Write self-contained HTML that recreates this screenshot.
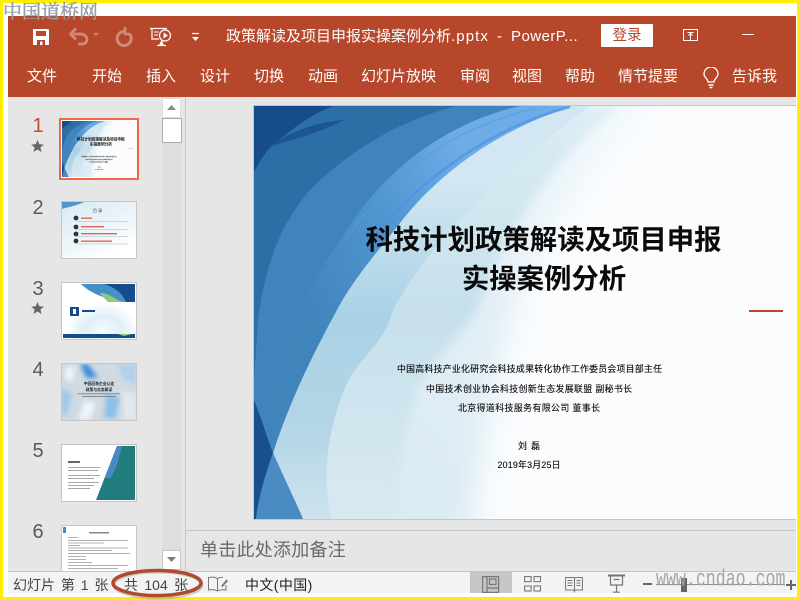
<!DOCTYPE html>
<html lang="zh"><head><meta charset="utf-8"><title>PowerPoint</title>
<style>
html,body{margin:0;padding:0;width:800px;height:600px;overflow:hidden;background:#fff}
body{position:relative;font-family:"Liberation Sans","Noto Sans CJK SC",sans-serif}
div,span,svg{position:absolute}
.m{top:67px;font-size:15px;line-height:20px;color:#fff;white-space:nowrap}
.n{left:25px;width:26px;text-align:center;font-size:20px;line-height:24px;color:#5a5a5a}
.t{left:61px;width:76px;height:58px;background:#fff;box-sizing:border-box;border:1px solid #c6c6c6;overflow:hidden}
.s{font-size:14px;line-height:20px;top:575px;color:#444;white-space:nowrap}
</style></head><body>
<svg width="0" height="0" style="left:0;top:0">
<defs>
<filter id="soft" x="-15%" y="-15%" width="130%" height="130%"><feGaussianBlur stdDeviation="14"/></filter>
<filter id="soft2" x="-10%" y="-10%" width="120%" height="120%"><feGaussianBlur stdDeviation="5"/></filter>
<clipPath id="cl"><rect x="254" y="106" width="551" height="413"/></clipPath>
<linearGradient id="pale" gradientUnits="userSpaceOnUse" x1="300" y1="519" x2="640" y2="180"><stop offset="0" stop-color="#d8e9f2"/><stop offset=".6" stop-color="#e2eff6"/><stop offset="1" stop-color="#f0f7fb"/></linearGradient>
<linearGradient id="pale2" gradientUnits="userSpaceOnUse" x1="0" y1="106" x2="0" y2="519"><stop offset="0" stop-color="#dcedf5"/><stop offset=".5" stop-color="#c6e0eb"/><stop offset="1" stop-color="#d9e9f1"/></linearGradient>
<linearGradient id="lb" gradientUnits="userSpaceOnUse" x1="0" y1="180" x2="0" y2="519"><stop offset="0" stop-color="#d2e7f1"/><stop offset=".4" stop-color="#a9d2e6"/><stop offset=".75" stop-color="#b4d6e6"/><stop offset="1" stop-color="#cfe3ed"/></linearGradient>
<linearGradient id="mb" gradientUnits="userSpaceOnUse" x1="280" y1="260" x2="470" y2="170"><stop offset="0" stop-color="#4084bc"/><stop offset=".55" stop-color="#5096d0"/><stop offset="1" stop-color="#6eabe9"/></linearGradient>
<g id="art">
<rect x="254" y="106" width="551" height="413" fill="#fafcfe"/>
<g clip-path="url(#cl)">
<path d="M200 60H670C605 160 550 215 525 280C500 350 480 440 470 560H200Z" fill="url(#pale)" filter="url(#soft)"/>
<path d="M254 106H620C560 150 505 230 477 310C460 335 430 365 417 390C405 430 398 480 396 519H254Z" fill="url(#pale2)" filter="url(#soft2)"/>
</g>
<path d="M254 106H590C490 180 425 250 393 310C385 340 368 350 350 377C325 430 322 480 332 519H254Z" fill="url(#lb)"/>
<path d="M254 106H572C500 130 440 170 397 227C370 260 350 285 337 310C315 350 290 400 273 453C285 480 295 500 303 519H254Z" fill="url(#mb)"/>
<path d="M254 106H520C450 122 390 165 350 225C325 262 300 300 285 345C276 375 266 415 258 445L254 455Z" fill="#3f84bc"/>
<path d="M254 106H457C400 120 350 150 310 190C280 225 265 265 258 320L254 380Z" fill="#2c6fa6"/>
<path d="M254 106H333C310 115 290 130 270 148C263 155 259 163 254 172Z" fill="#174c8c"/>
<path d="M268 147C290 132 315 122 344 120C320 133 292 140 268 147Z" fill="#1b5596"/>
<path d="M570 107C480 130 410 190 352 258" fill="none" stroke="#4a93de" stroke-width="2.500" opacity=".7"/>
<path d="M535 108C450 130 395 170 345 240" fill="none" stroke="#5b9bd5" stroke-width="2" opacity=".5"/>
<path d="M254 400C262 420 268 440 273 453C265 475 258 500 256 519H254Z" fill="#1a4f8f"/>
<path d="M273 453L303 519H256C258 500 265 475 273 453Z" fill="#4a8bc4"/>
<rect x="749" y="310" width="34" height="2" fill="#b7472a"/>
<g text-anchor="middle" fill="#0a0a0a" font-family="'Liberation Sans','Noto Sans CJK SC',sans-serif">
<text x="543.5" y="249" font-size="27.4" font-weight="700">科技计划政策解读及项目申报</text>
<text x="544" y="288" font-size="27.4" font-weight="700">实操案例分析</text>
<g stroke="#0a0a0a" stroke-width=".12">
<text x="529.5" y="372" font-size="8.9" textLength="265" lengthAdjust="spacing">中国高科技产业化研究会科技成果转化协作工作委员会项目部主任</text>
<text x="529" y="392" font-size="8.9" xml:space="preserve" textLength="206" lengthAdjust="spacing">中国技术创业协会科技创新生态发展联盟 副秘书长</text>
<text x="529" y="411" font-size="8.9" xml:space="preserve" textLength="142" lengthAdjust="spacing">北京得道科技服务有限公司 董事长</text>
<text x="529" y="449" font-size="8.9" xml:space="preserve" textLength="22" lengthAdjust="spacing">刘  磊</text>
<text x="529" y="468" font-size="8.9" textLength="63" lengthAdjust="spacing">2019年3月25日</text>
</g>
</g>
</g>
</defs></svg>

<!-- frame -->
<div style="left:0;top:0;width:800px;height:3px;background:#ffee00"></div>
<div style="left:0;bottom:0;width:800px;height:3px;background:#ffee00"></div>
<div style="left:0;top:0;width:3px;height:600px;background:#ffee00"></div>
<div style="right:0;top:0;width:3px;height:600px;background:#ffee00"></div>

<div id="w" style="left:8px;top:16px;width:788px;height:577px;background:#e6e6e6;overflow:hidden"></div>

<!-- ribbon -->
<div style="left:8px;top:16px;width:788px;height:81px;background:#b7472a"></div>
<svg style="left:30px;top:26px" width="22" height="22" viewBox="0 0 22 22"><path d="M3 3H18L19 4V19H3Z" fill="#fff"/><rect x="6" y="5" width="10" height="5" fill="#b7472a"/><rect x="7" y="14" width="8" height="5" fill="#b7472a"/><rect x="10" y="15.500" width="2.500" height="3.500" fill="#fff"/></svg>
<svg style="left:68px;top:27px" width="32" height="20" viewBox="0 0 32 20"><path d="M3 7H13C17 7 19 10 19 12.500C19 15 17 17 15 17H10" fill="none" stroke="#cf8a75" stroke-width="2.800"/><path d="M8 1.500L2.500 7L8 12.500" fill="none" stroke="#cf8a75" stroke-width="2.800"/><path d="M25 6H31L28 9Z" fill="#cf8a75"/></svg>
<svg style="left:113px;top:26px" width="20" height="21" viewBox="0 0 20 21"><path d="M11 5.500A7 7 0 1 0 16.500 8" fill="none" stroke="#cf8a75" stroke-width="3"/><path d="M12 1V8H17" fill="none" stroke="#cf8a75" stroke-width="2.600"/></svg>
<svg style="left:149px;top:27px" width="24" height="20" viewBox="0 0 24 20" fill="none" stroke="#fff" stroke-width="1.200"><path d="M1 1.500H18M3 2V12H10"/><path d="M5 5H10M5 8H9" stroke-width="1"/><circle cx="16" cy="8.500" r="5.500"/><path d="M14.500 5.500L19 8.500L14.500 11.500Z" fill="#fff" stroke="none"/><path d="M10 18L12.500 13L15 18Z" fill="#fff" stroke="none"/><path d="M8 18.500H17"/></svg>
<svg style="left:191px;top:32px" width="9" height="10" viewBox="0 0 9 10"><path d="M1 1.500H8" stroke="#fff" stroke-width="1.200"/><path d="M1 5H8L4.500 9Z" fill="#fff"/></svg>
<div style="left:226px;top:26px;font-size:15px;line-height:21px;color:#fff;white-space:nowrap">政策解读及项目申报实操案例分析<span style="position:static;letter-spacing:1.100px">.pptx</span></div>
<div style="left:497px;top:26px;font-size:15px;line-height:21px;color:#fff">-</div>
<div style="left:511px;top:26px;font-size:15px;line-height:21px;color:#fff;white-space:nowrap;letter-spacing:.45px">PowerP...</div>
<div style="left:601px;top:24px;width:52px;height:23px;background:#fff;border-radius:1px"></div>
<div style="left:601px;top:25px;width:52px;height:23px;color:#b7472a;font-size:14.500px;line-height:23px;text-align:center">登录</div>
<svg style="left:682px;top:28px" width="18" height="15" viewBox="0 0 18 15" fill="none" stroke="#fff"><rect x="1.500" y="1.500" width="14" height="11"/><path d="M5.500 4.500H11.500M8.500 5V12M6.500 7.500L8.500 5.500L10.500 7.500"/></svg>
<div style="left:742px;top:34px;width:12px;height:1px;background:#fff"></div>
<div class="m" style="left:27px">文件</div>
<div class="m" style="left:92px">开始</div>
<div class="m" style="left:146px">插入</div>
<div class="m" style="left:200px">设计</div>
<div class="m" style="left:254px">切换</div>
<div class="m" style="left:308px">动画</div>
<div class="m" style="left:361px">幻灯片放映</div>
<div class="m" style="left:460px">审阅</div>
<div class="m" style="left:512px">视图</div>
<div class="m" style="left:565px">帮助</div>
<div class="m" style="left:618px">情节提要</div>
<div class="m" style="left:732px">告诉我</div>
<svg style="left:702px;top:67px" width="18" height="22" viewBox="0 0 18 22" fill="none" stroke="#fff" stroke-width="1.300"><path d="M6 15C6 12 2 10.500 2 7A7 7 0 0 1 16 7C16 10.500 12 12 12 15Z"/><path d="M6.500 18H11.500M7.500 20.500H10.500" stroke-width="1.500"/></svg>

<!-- left panel -->
<div style="left:185px;top:97px;width:1px;height:474px;background:#c6c6c6"></div>
<div style="left:162px;top:97px;width:19px;height:474px;background:#dedede"></div>
<div style="left:163px;top:99px;width:17px;height:18px;background:#fff"></div>
<svg style="left:163px;top:99px" width="17" height="18"><path d="M4 11L8.500 6L13 11Z" fill="#8a8a8a"/></svg>
<div style="left:162px;top:118px;width:18px;height:23px;background:#fff;border:1px solid #ababab"></div>
<div style="left:162px;top:550px;width:17px;height:18px;background:#fff;border:1px solid #c6c6c6"></div>
<svg style="left:163px;top:551px" width="17" height="18"><path d="M4 6L8.500 11L13 6Z" fill="#7a7a7a"/></svg>

<div class="n" style="top:114px;color:#c5492a">1</div>
<div class="n" style="top:196px">2</div>
<div class="n" style="top:277px">3</div>
<div class="n" style="top:358px">4</div>
<div class="n" style="top:439px">5</div>
<div class="n" style="top:520px">6</div>
<svg style="left:30px;top:139px" width="14" height="14" viewBox="0 0 14 14"><path d="M7.500 1L9.300 5.300L13.800 5.600L10.400 8.500L11.500 13L7.500 10.500L3.500 13L4.600 8.500L1.200 5.600L5.700 5.300Z" fill="#666"/></svg>
<svg style="left:30px;top:301px" width="14" height="14" viewBox="0 0 14 14"><path d="M7.500 1L9.300 5.300L13.800 5.600L10.400 8.500L11.500 13L7.500 10.500L3.500 13L4.600 8.500L1.200 5.600L5.700 5.300Z" fill="#666"/></svg>

<!-- thumb 1 -->
<div style="left:59px;top:118px;width:80px;height:62px;background:#f0674a"></div>
<div style="left:61px;top:120px;width:76px;height:58px;background:#fff"></div>
<svg style="left:62px;top:121px" width="74" height="56" viewBox="254 106 551 413" preserveAspectRatio="none"><use href="#art"/></svg>

<!-- thumb 2 -->
<div class="t" style="top:201px">
<svg style="left:0;top:0" width="74" height="56" viewBox="0 0 74 56">
<defs><linearGradient id="g2" x1="0" y1="0" x2="0.600" y2="1"><stop offset="0" stop-color="#d8eaf4"/><stop offset=".7" stop-color="#f0f7fb"/><stop offset="1" stop-color="#fff"/></linearGradient></defs>
<rect width="74" height="56" fill="url(#g2)"/>
<path d="M0 0H22C14 4 6 5 0 7Z" fill="#4f97cc"/>
<text x="31" y="10" font-size="4" fill="#333">目 录</text>
<g fill="#333"><circle cx="14" cy="16" r="2.400"/><circle cx="14" cy="25" r="2.400"/><circle cx="14" cy="32" r="2.400"/><circle cx="14" cy="39" r="2.400"/></g>
<g fill="#dd6a50"><rect x="19" y="15.500" width="11" height="1.400"/><rect x="19" y="24" width="23" height="1.400"/><rect x="19" y="31" width="36" height="1.400"/><rect x="19" y="38.500" width="31" height="1.400"/></g>
<g fill="#c4d0d8"><rect x="15" y="19" width="51" height=".8"/><rect x="15" y="27" width="51" height=".8"/><rect x="15" y="34" width="51" height=".8"/><rect x="15" y="41.500" width="51" height=".8"/></g>
</svg></div>

<!-- thumb 3 -->
<div class="t" style="top:282px">
<svg style="left:0;top:0" width="74" height="56" viewBox="0 0 74 56">
<defs><radialGradient id="g3" cx=".55" cy=".85" r=".5"><stop offset="0" stop-color="#f6fbfd"/><stop offset=".5" stop-color="#dfeff6"/><stop offset="1" stop-color="#fff"/></radialGradient></defs>
<rect width="74" height="56" fill="url(#g3)"/>
<path d="M19 1H73V19H62C48 17 30 12 19 1Z" fill="#4490c8"/>
<path d="M42 1H73V19H64C60 10 54 5 42 1Z" fill="#174c8c"/>
<path d="M38 10C46 10 50 14 60 19H46C43 16 40 13 38 10Z" fill="#8fca7d"/>
<rect x="8" y="24" width="9" height="9" fill="#174c8c"/>
<rect x="11" y="26" width="3" height="5" fill="#fff"/>
<rect x="20" y="27" width="13" height="2" fill="#174c8c"/>
<rect x="1" y="51" width="72" height="4" fill="#174c8c"/><path d="M56 51H70L62 53Z" fill="#8fca7d"/>
</svg></div>

<!-- thumb 4 -->
<div class="t" style="top:363px">
<svg style="left:0;top:0" width="74" height="56" viewBox="0 0 74 56">
<defs><filter id="b" x="-20%" y="-20%" width="140%" height="140%"><feGaussianBlur stdDeviation="2.500"/></filter></defs>
<rect width="74" height="56" fill="#d0dae2"/>
<g filter="url(#b)">
<path d="M18 0L26 0L36 14L24 14Z" fill="#3f8fd8"/>
<path d="M0 24L10 30L5 50L0 52Z" fill="#9cc8ea"/>
<path d="M44 30L58 34L54 54L42 54Z" fill="#8cc0e8"/>
<path d="M55 0H74V20L62 16Z" fill="#b0d2ec"/>
<path d="M22 36L34 40L28 56L16 56Z" fill="#eef3f7"/>
<path d="M60 26L74 30V56H62Z" fill="#e2e8ee"/>
<path d="M4 2L14 4L10 18L2 14Z" fill="#eef3f7"/>
</g>
<text x="37" y="21" text-anchor="middle" font-size="3.800" fill="#222" font-weight="700">中国高新企业认定</text>
<text x="37" y="27" text-anchor="middle" font-size="3.800" fill="#222" font-weight="700">政策与实务解读</text>
<rect x="16" y="29.500" width="42" height=".7" fill="#666"/><rect x="20" y="32" width="34" height=".7" fill="#666"/>
</svg></div>

<!-- thumb 5 -->
<div class="t" style="top:444px">
<svg style="left:0;top:0" width="74" height="56" viewBox="0 0 74 56">
<rect width="74" height="56" fill="#fff"/>
<path d="M55 1H73V55H34Z" fill="#217c7e"/>
<path d="M55 1H60L55 20L49 33L42.500 33Z" fill="#4a88c2"/>
<rect x="6" y="16" width="12" height="2" fill="#666"/>
<g fill="#a6a6a6"><rect x="6" y="22" width="32" height="1"/><rect x="6" y="25" width="30" height="1"/><rect x="6" y="30" width="32" height="1"/><rect x="6" y="33" width="26" height="1"/><rect x="6" y="37" width="31" height="1"/><rect x="6" y="40" width="26" height="1"/><rect x="6" y="43" width="22" height="1"/></g>
</svg></div>

<!-- thumb 6 -->
<div class="t" style="top:525px;height:46px;border-bottom:0">
<svg style="left:0;top:0" width="74" height="46" viewBox="0 0 74 46">
<rect width="74" height="46" fill="#fff"/>
<rect x="1" y="1" width="3" height="6" fill="#4a88c2"/>
<rect x="27" y="6" width="20" height="1.500" fill="#888"/>
<g fill="#b0b0b0"><rect x="6" y="11" width="10" height="1"/><rect x="6" y="14" width="60" height="1"/><rect x="6" y="16.500" width="36" height="1"/><rect x="6" y="19" width="12" height="1"/><rect x="6" y="21.500" width="60" height="1"/><rect x="6" y="24" width="44" height="1"/><rect x="6" y="27" width="62" height="1"/><rect x="6" y="30" width="18" height="1"/><rect x="6" y="33" width="18" height="1"/><rect x="6" y="36" width="24" height="1"/><rect x="6" y="39" width="60" height="1"/><rect x="6" y="42" width="50" height="1"/></g>
</svg></div>

<!-- slide -->
<div style="left:253px;top:105px;width:543px;height:415px;background:#c6c6c6"></div>
<div style="left:254px;top:106px;width:542px;height:413px;overflow:hidden">
<svg style="left:0;top:0" width="551" height="413" viewBox="254 106 551 413"><use href="#art"/></svg>
</div>

<!-- notes -->
<div style="left:186px;top:530px;width:610px;height:1px;background:#c6c6c6"></div>
<div style="left:200px;top:538px;font-size:18px;line-height:24px;letter-spacing:.25px;color:#696969;white-space:nowrap">单击此处添加备注</div>

<!-- status -->
<div style="left:8px;top:571px;width:788px;height:22px;background:#f3f3f3;border-top:1px solid #c6c6c6;box-sizing:border-box"></div>
<div class="s" style="left:13px;word-spacing:2px">幻灯片 第 1 张</div>
<div class="s" style="left:124px;word-spacing:2.500px">共 104 张</div>
<svg style="left:106px;top:565px" width="102" height="35" viewBox="0 0 102 35"><ellipse cx="52" cy="20" rx="44" ry="13" fill="none" stroke="#999" stroke-width="3" opacity=".45"/><ellipse cx="51" cy="18" rx="44" ry="12.500" fill="none" stroke="#b04a2e" stroke-width="3.500"/></svg>
<svg style="left:207px;top:576px" width="22" height="17" viewBox="0 0 22 17" fill="none" stroke="#777"><path d="M10.500 2.500C8 1 4 1 1.500 1.500V14C4 13.500 8 13.500 10.500 15C13 13.500 16 13.500 19 14V9M10.500 2.500V15M10.500 2.500C12 1.700 14 1.300 16 1.300"/><path d="M14 10L19.500 3.500L21 5L15.500 11Z" fill="#777" stroke="none"/></svg>
<div class="s" style="left:245px;color:#222;letter-spacing:.4px">中文(中国)</div>
<div style="left:470px;top:572px;width:42px;height:21px;background:#c6c6c6"></div>
<svg style="left:482px;top:576px" width="18" height="17" viewBox="0 0 18 17" fill="none" stroke="#777" stroke-width="1.200"><path d="M.6.600H16.600V16.400H.6ZM5 .6V16.400M5 12H16.600"/><rect x="7.500" y="3" width="6.500" height="5.500"/></svg>
<svg style="left:524px;top:576px" width="18" height="17" viewBox="0 0 18 17" fill="none" stroke="#777" stroke-width="1.100"><rect x=".6" y=".6" width="6.500" height="5"/><rect x="10" y=".6" width="6.500" height="5"/><rect x="0.600" y="10" width="6.500" height="5"/><rect x="10" y="10" width="6.500" height="5"/></svg>
<svg style="left:565px;top:576px" width="19" height="17" viewBox="0 0 19 17" fill="none" stroke="#777" stroke-width="1"><path d="M.6 1.500H8.500L9.500 2.500L10.500 1.500H17.400V14H10.500L9.500 15L8.500 14H.6ZM9.500 2.500V16.500M2.500 4.500H7.500M2.500 7H7.500M2.500 9.500H7.500M11.500 4.500H15.500M11.500 7H15.500M11.500 9.500H15.500"/></svg>
<svg style="left:608px;top:574px" width="18" height="19" viewBox="0 0 18 19" fill="none" stroke="#777" stroke-width="1.200"><path d="M0 1.500H17" stroke-width="2"/><path d="M2.500 2V11H14.500V2M5.500 5.500H11.500M8.500 11V18M5 18.200H12"/></svg>
<div style="left:643px;top:583px;width:9px;height:2px;background:#666"></div>
<div style="left:656px;top:584px;width:129px;height:1px;background:#8a8a8a"></div>
<div style="left:681px;top:578px;width:6px;height:14px;background:#666"></div>
<svg style="left:786px;top:578px" width="11" height="12"><path d="M0 7H10M5 2V12" stroke="#666" stroke-width="2"/></svg>

<!-- watermarks -->
<div style="left:3px;top:0;font-family:'Liberation Serif','Noto Serif CJK SC',serif;font-size:19px;line-height:26px;color:#98a2a8;white-space:nowrap;-webkit-text-stroke:.35px #87929a">中国道桥网</div>
<div style="left:656px;top:568px;width:129px;height:26px;font-family:'Liberation Mono',monospace;font-size:16.600px;line-height:26px;color:#a6a6a6;white-space:nowrap;transform:scaleY(1.400);transform-origin:0 60%">www.cndao.com</div>
</body></html>
